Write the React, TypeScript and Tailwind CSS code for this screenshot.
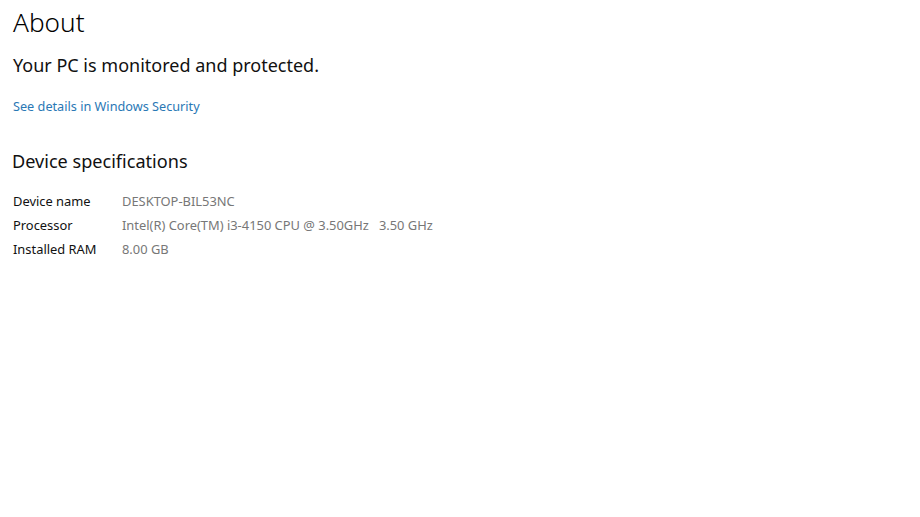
const specs = [
  { label: "Device name", value: "DESKTOP-BIL53NC" },
  { label: "Processor", value: "Intel(R) Core(TM) i3-4150 CPU @ 3.50GHz   3.50 GHz" },
  { label: "Installed RAM", value: "8.00 GB" },
];

export default function App() {
  return (
    <div
      className="w-[920px] h-[517px] bg-white text-black overflow-hidden"
      style={{ fontFamily: '"Noto Sans", "Open Sans", sans-serif' }}
    >
      <div className="pl-[13px] pt-[2px]">
        <h1 className="text-[26.2px] leading-[40px] font-light">About</h1>

        <p className="mt-[5px] text-[18px] leading-[36px] text-[#111]">Your PC is monitored and protected.</p>

        <a className="block mt-[13px] text-[12.7px] leading-[20px] text-[#2a78b5]">
          See details in Windows Security
        </a>

        <h2 className="mt-[29px] -ml-[1px] text-[18.1px] leading-[32px] text-[#111]">Device specifications</h2>

        <div className="mt-[13px] flex flex-col text-[12.9px]">
          {specs.map((s) => (
            <div key={s.label} className="flex h-[24px] items-center">
              <span className="w-[109px] text-[#111]">{s.label}</span>
              <span className="text-[#777777] whitespace-pre">{s.value}</span>
            </div>
          ))}
        </div>
      </div>
    </div>
  );
}
